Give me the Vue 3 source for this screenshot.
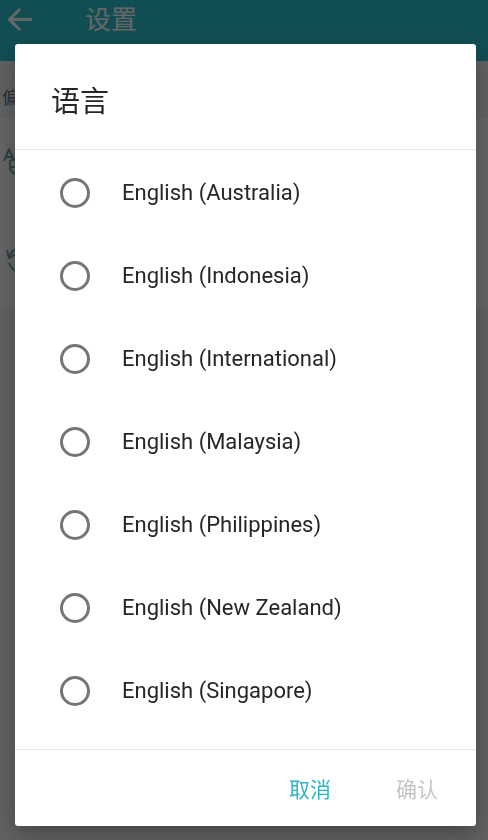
<script setup>
import { ref } from 'vue'

//#region State

const languages = [
  { code: 'en-AU', label: 'English (Australia)' },
  { code: 'en-ID', label: 'English (Indonesia)' },
  { code: 'en', label: 'English (International)' },
  { code: 'en-MY', label: 'English (Malaysia)' },
  { code: 'en-PH', label: 'English (Philippines)' },
  { code: 'en-NZ', label: 'English (New Zealand)' },
  { code: 'en-SG', label: 'English (Singapore)' }
]

const selected = ref('')
const isOpen = ref(true)

//#endregion
//#region Internal Handlers

function cancel() {
  selected.value = ''
  isOpen.value = false
}

function confirm() {
  isOpen.value = false
}

//#endregion
</script>
<template>
  <div class="settings">
    <header class="app-bar">
      <button type="button" class="back-button" aria-label="返回">
        <svg width="26" height="26" viewBox="0 0 26 26" fill="none" stroke="currentColor" stroke-width="3">
          <path d="M25 12.500H3M13 2L2.500 12.500l10.500 10.500" />
        </svg>
      </button>
      <h1>设置</h1>
    </header>
    <main>
      <h2 class="section-title">偏好</h2>
      <div class="panel">
        <button type="button" class="panel-row" aria-label="语言" @click="isOpen = true">
          <svg class="row-icon" viewBox="0 0 34 34">
            <path d="M1 13L6 1l5 12M3 9h6M12 5l4 3M13 12c-4-1-6 0-6 2v5c0 5 5 8 10 8s10-4 10-9-4-9-9-9M8 19h10" />
          </svg>
        </button>
        <button type="button" class="panel-row" aria-label="更新">
          <svg class="row-icon" viewBox="0 0 34 34">
            <path d="M4 8l2 8 7-4M6 15C8 10 12 6 18 6c6 0 11 5 12 11M6 21c2 5 6 9 12 9s11-4 12-9" />
          </svg>
        </button>
      </div>
    </main>

    <div v-if="isOpen" class="overlay">
      <form class="dialog" role="dialog" aria-labelledby="dialog-title" @submit.prevent="confirm">
        <h2 id="dialog-title" class="dialog-title">语言</h2>
        <div class="options">
          <label v-for="language in languages" :key="language.code" class="option">
            <input v-model="selected" type="radio" name="language" :value="language.code" />
            <span>{{ language.label }}</span>
          </label>
        </div>
        <footer class="actions">
          <button type="button" class="action" @click="cancel">取消</button>
          <button type="submit" class="action" :disabled="!selected">确认</button>
        </footer>
      </form>
    </div>
  </div>
</template>
<style>
body {
  margin: 0;
}
</style>
<style scoped>
.settings {
  min-height: 100vh;
  background: #f0f3f6;
  color: #262626;
  font-family: Roboto, "Noto Sans CJK SC", sans-serif;
}

button {
  margin: 0;
  padding: 0;
  border: none;
  background: transparent;
  font: inherit;
  color: inherit;
}

h1,
h2 {
  margin: 0;
  font-weight: 400;
}

.app-bar {
  display: flex;
  align-items: flex-start;
  gap: 52px;
  box-sizing: border-box;
  height: 61px;
  padding: 0 7px;
  background: #2cc3cf;
  color: #fff;
}

.back-button {
  display: flex;
  padding-top: 7px;
}

.app-bar h1 {
  font-size: 26px;
  line-height: 40px;
}

.section-title {
  padding: 25px 2px 8px;
  font-size: 17px;
  line-height: 24px;
  color: #777;
}

.panel {
  padding-bottom: 2px;
  background: #fff;
}

.panel-row {
  display: flex;
  align-items: center;
  width: 100%;
  height: 94px;
  padding: 0 3px;
}

.row-icon {
  width: 34px;
  height: 34px;
  fill: none;
  stroke: #6fa5a8;
  stroke-width: 2;
}

.overlay {
  position: fixed;
  inset: 0;
  display: flex;
  box-sizing: border-box;
  padding: 44px 12px 14px 15px;
  background: rgba(0, 0, 0, 0.6);
}

.dialog {
  display: flex;
  flex: 1;
  flex-direction: column;
  border-radius: 3px;
  background: #fff;
  box-shadow: 0 8px 24px rgba(0, 0, 0, 0.3);
}

.dialog-title {
  padding: 38px 36px 27px;
  border-bottom: 1px solid #e6e6e6;
  font-size: 29px;
  line-height: 40px;
}

.options {
  flex: 1;
  min-height: 0;
  padding-top: 1px;
  overflow-y: auto;
}

.option {
  display: flex;
  align-items: center;
  gap: 32px;
  height: 83px;
  padding: 0 45px;
  font-size: 22px;
}

.option input {
  appearance: none;
  flex: none;
  box-sizing: border-box;
  width: 30px;
  height: 30px;
  margin: 0;
  border: 3px solid #757575;
  border-radius: 50%;
}

.option input:checked {
  border-color: #2ab7c2;
  background: radial-gradient(#2ab7c2 50%, transparent 55%);
}

.actions {
  display: flex;
  justify-content: flex-end;
  gap: 65px;
  padding: 20px 38px 16px;
  border-top: 1px solid #e6e6e6;
}

.action {
  font-size: 21px;
  line-height: 40px;
  color: #2ab7c2;
}

.action:disabled {
  color: #c4c4c4;
}
</style>
